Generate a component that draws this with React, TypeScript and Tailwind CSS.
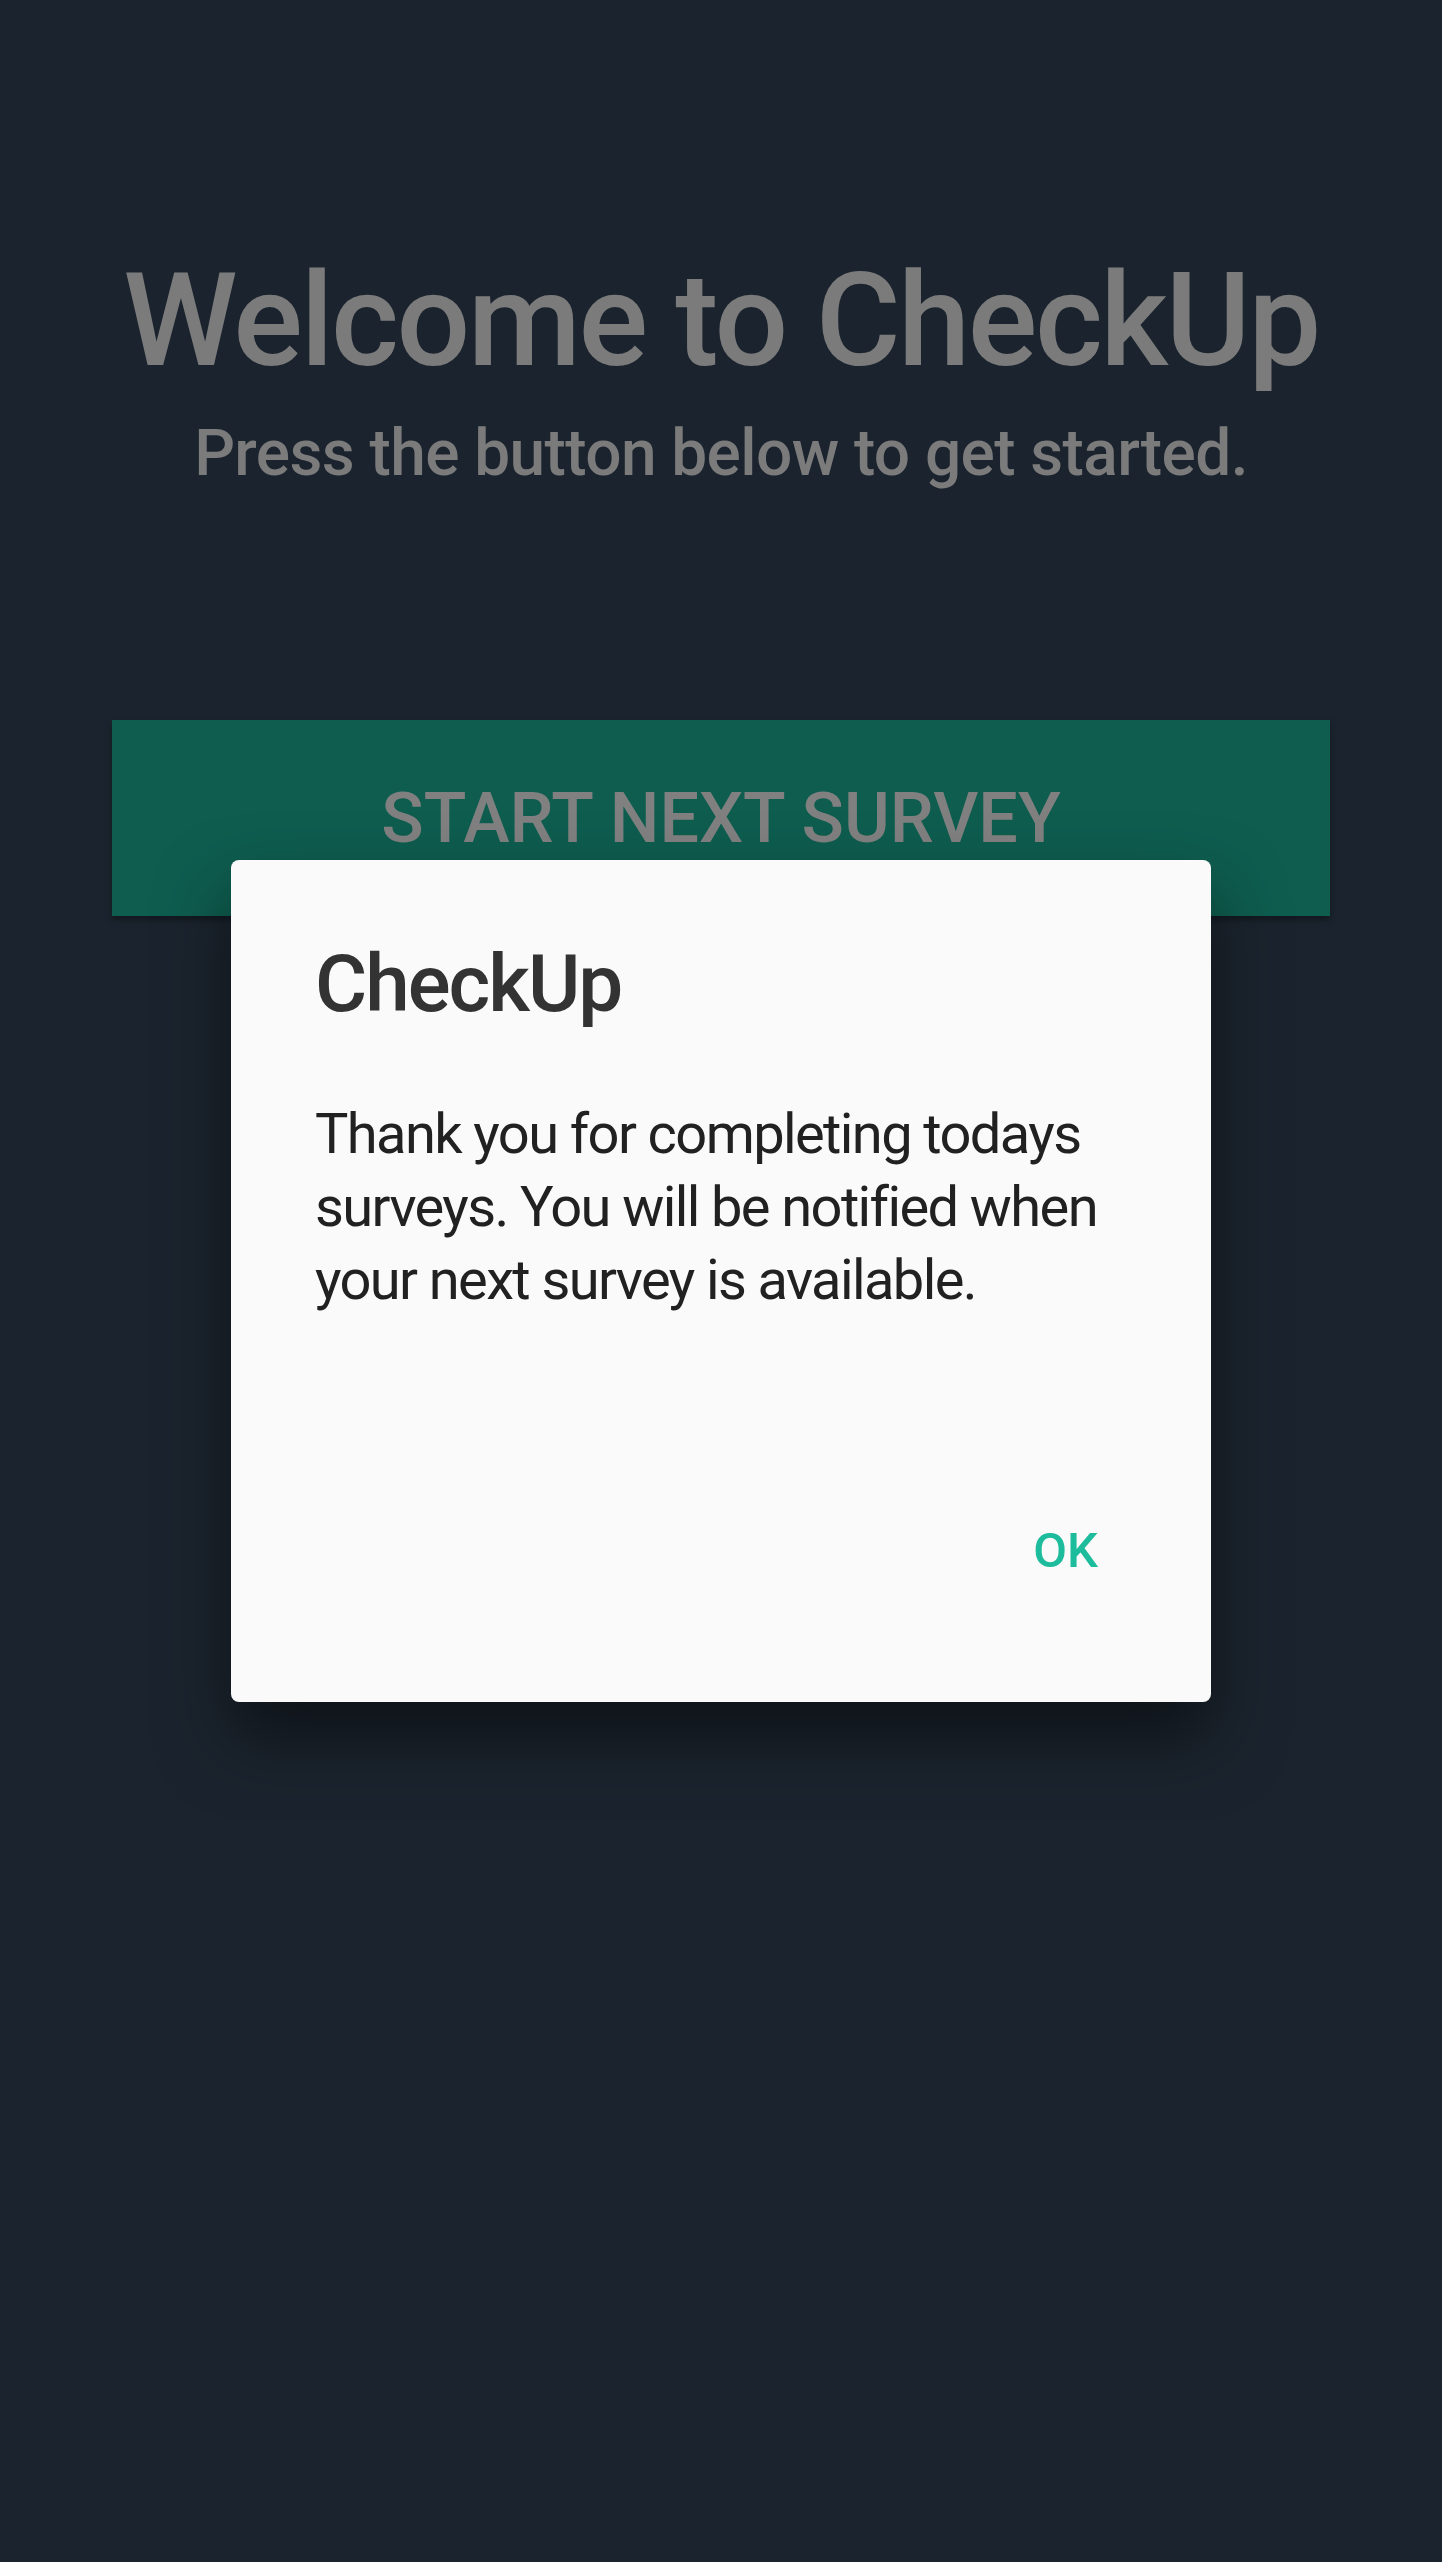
const App = () => {
  return (
    <div
      className="relative h-[2562px] w-full overflow-hidden bg-[#1b242e]"
      style={{ fontFamily: "Roboto, 'Noto Sans', sans-serif" }}
    >
      <div className="flex flex-col items-center pt-[256px]">
        <h1 className="text-[130px] leading-none font-medium text-[#7b7b7b] tracking-[-2.5px]">
          Welcome to CheckUp
        </h1>
        <p className="mt-[36px] text-[64px] leading-none font-medium text-[#7b7b7b] tracking-[-0.6px]">
          Press the button below to get started.
        </p>
      </div>

      <div className="mx-[112px] mt-[234px] flex h-[196px] items-center justify-center bg-[#0e5d4f] shadow-[0_4px_6px_rgba(0,0,0,0.35)]">
        <span className="text-[70px] leading-none font-medium text-[#808080]">
          START NEXT SURVEY
        </span>
      </div>

      <div className="absolute inset-0 flex items-center justify-center">
        <div className="w-[980px] rounded-[8px] bg-[#fafafa] pt-[84px] pb-[127px] shadow-[0_36px_70px_rgba(0,0,0,0.5)]">
          <h2 className="px-[84px] text-[80px] leading-none font-medium text-[#333333] tracking-[-2px]">
            CheckUp
          </h2>
          <p className="mt-[74px] px-[84px] text-[56px] leading-[73px] text-[#212121] tracking-[-1.6px]">
            Thank you for completing todays surveys. You will be notified when
            your next survey is available.
          </p>
          <div className="mt-[209px] flex justify-end pr-[113px]">
            <button className="text-[49px] leading-none font-medium text-[#1dbc9c]">
              OK
            </button>
          </div>
        </div>
      </div>
    </div>
  );
};

export default App;
